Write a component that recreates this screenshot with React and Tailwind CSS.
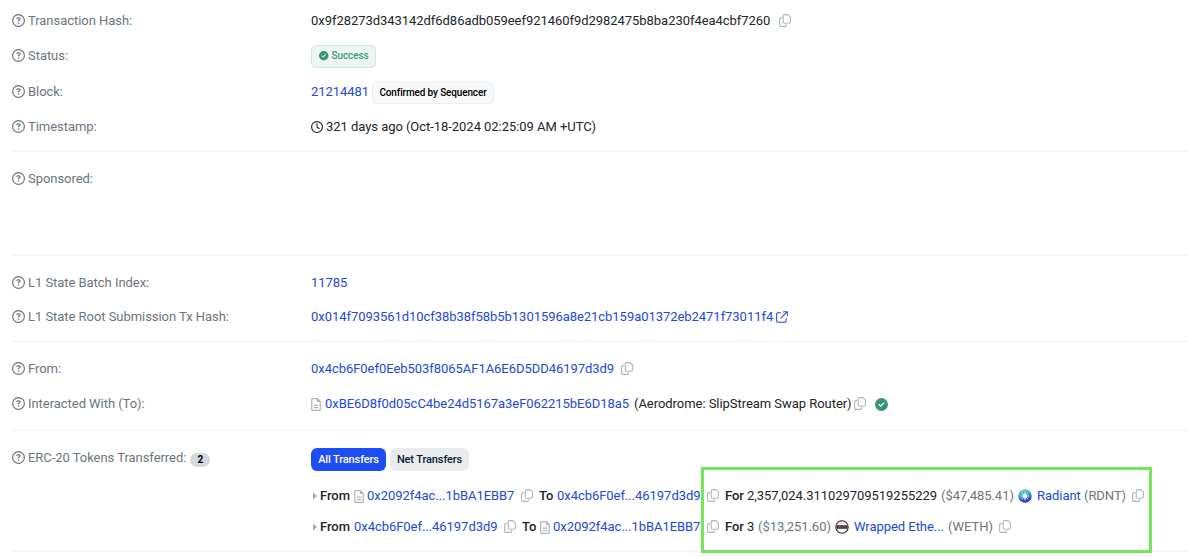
import React from "react";
import {
  FaRegCircleQuestion,
  FaRegClock,
  FaCircleCheck,
  FaRegFileLines,
} from "react-icons/fa6";

function CopyIcon({ className = "" }) {
  return (
    <svg
      viewBox="0 0 12 13"
      fill="none"
      stroke="#adb5bd"
      strokeWidth="1.1"
      strokeLinecap="round"
      className={`mb-px h-[13px] w-3 shrink-0 ${className}`}
    >
      <path d="M5.6 .6h3.1l2.7 2.3v4.9a1.4 1.4 0 0 1-1.4 1.4H5.6a1.4 1.4 0 0 1-1.4-1.4V2a1.4 1.4 0 0 1 1.4-1.4z" />
      <path d="M2.7 3.6H2A1.4 1.4 0 0 0 .6 5v6A1.4 1.4 0 0 0 2 12.4h4.2A1.4 1.4 0 0 0 7.6 11v-.2" />
    </svg>
  );
}

function ExternalIcon() {
  return (
    <svg
      viewBox="0 0 13 13"
      fill="none"
      stroke="#2248d8"
      strokeWidth="1.1"
      strokeLinecap="round"
      strokeLinejoin="round"
      className="ml-[3px] size-3 shrink-0"
    >
      <path d="M5 1.9H2.1A1.4 1.4 0 0 0 .7 3.3v7.5a1.4 1.4 0 0 0 1.4 1.4h7.5a1.4 1.4 0 0 0 1.4-1.4V8" />
      <path d="M8.2.7h4.1v4.1M12.1.9 5.2 7.8" />
    </svg>
  );
}

function RadiantLogo() {
  return (
    <svg viewBox="0 0 28 28" className="size-[14px] shrink-0">
      <defs>
        <linearGradient id="radiant" x1="0.3" y1="0" x2="0.6" y2="1">
          <stop offset="0" stopColor="#5be3b0" />
          <stop offset="0.5" stopColor="#2f93c4" />
          <stop offset="1" stopColor="#4417e0" />
        </linearGradient>
      </defs>
      <circle cx="14" cy="14" r="13.5" fill="url(#radiant)" />
      <path
        d="M14 6v16M6 14h16M8.4 8.4l11.2 11.2M19.6 8.4 8.4 19.6"
        stroke="#e4fbff"
        strokeWidth="2"
        strokeLinecap="round"
      />
      <circle cx="14" cy="14" r="4.5" fill="#e9fbff" />
    </svg>
  );
}

function WethLogo() {
  return (
    <svg viewBox="0 0 28 28" className="size-[14px] shrink-0">
      <circle cx="14" cy="14" r="12.4" fill="#fff" stroke="#3a2532" strokeWidth="2.2" />
      <path d="M2 11A12.4 12.4 0 0 1 14 1.6" fill="none" stroke="#a8486c" strokeWidth="2" />
      <path d="M8 7.5a9 9 0 0 1 12 0z" fill="#e6dbe1" />
      <rect x="3" y="10.5" width="22" height="7" rx="1.5" fill="#2b2228" />
      <path d="M6 12l1.5 3.5L9 12.5l1.5 3 1.3-3.5M14 12v4M16.5 12h3M18 12v4M21.5 12v4" stroke="#b9aeb5" strokeWidth="0.8" fill="none" />
    </svg>
  );
}

function Text({ className = "", children }) {
  return <span className={`shrink-0 whitespace-pre ${className}`}>{children}</span>;
}

function Row({ label, height, badge, children }) {
  return (
    <div className={`flex items-center ${height}`}>
      <div className="flex w-[299px] shrink-0 items-center text-[#6c757d]">
        <FaRegCircleQuestion className="mb-px size-[13px] shrink-0" />
        <Text className="ml-[3px]">{label}</Text>
        {badge}
      </div>
      <div className="flex min-w-0 grow items-center">{children}</div>
    </div>
  );
}

function FileIcon({ className = "" }) {
  return <FaRegFileLines className={`h-[13px] w-[10px] shrink-0 text-[#adb5bd] ${className}`} />;
}

function Caret() {
  return (
    <svg viewBox="0 0 4 8" className="ml-0.5 h-2 w-1 shrink-0" fill="#a3a9af">
      <path d="M0 .5 4 4 0 7.5z" />
    </svg>
  );
}

const link = "text-[#2248d8]";

export default function App() {
  return (
    <main className="relative h-[557px] w-[1200px] overflow-hidden bg-white px-3 font-[Roboto,sans-serif] text-[13px] leading-5 tracking-[-0.045px] text-[#212529]">
      <section className="h-[152px] border-b border-[#f1f2f4] pt-1">
        <Row label="Transaction Hash:" height="h-[34px]">
          <Text className="w-[468px]">0x9f28273d343142df6d86adb059eef921460f9d2982475b8ba230f4ea4cbf7260</Text>
          <CopyIcon />
        </Row>
        <Row label="Status:" height="h-9">
          <span className="flex h-[23px] w-[65px] items-center rounded-[5px] border border-[#cfe8df] bg-[#ebf5f2] pl-[7px] text-[10px] tracking-[-0.1px] font-medium text-[#3f9b7d]">
            <FaCircleCheck className="mr-[3px] size-[9.5px] shrink-0 text-[#379474]" />
            Success
          </span>
        </Row>
        <Row label="Block:" height="h-[35px]">
          <Text className={`w-[61px] ${link}`}>21214481</Text>
          <span className="mt-[3px] flex h-[22px] w-[122px] items-center justify-center rounded-[5px] border border-[#eceef0] bg-[#f8f9fa] text-[10px] tracking-[-0.14px] font-medium whitespace-nowrap text-black">
            Confirmed by Sequencer
          </span>
        </Row>
        <Row label="Timestamp:" height="h-9">
          <FaRegClock className="mr-[3px] size-3 shrink-0" />
          <Text>321 days ago (Oct-18-2024 02:25:09 AM +UTC)</Text>
        </Row>
      </section>

      <section className="h-[104px] border-b border-[#f1f2f4] pt-2.5">
        <Row label="Sponsored:" height="h-[34px]" />
      </section>

      <section className="h-[86px] border-b border-[#f1f2f4] pt-2.5">
        <Row label="L1 State Batch Index:" height="h-[34px]">
          <Text className={link}>11785</Text>
        </Row>
        <Row label="L1 State Root Submission Tx Hash:" height="h-[34px]">
          <Text className={`w-[462px] ${link}`}>0x014f7093561d10cf38b38f58b5b1301596a8e21cb159a01372eb2471f73011f4</Text>
          <ExternalIcon />
        </Row>
      </section>

      <section className="h-[89px] border-b border-[#f1f2f4] pt-2.5">
        <Row label="From:" height="h-[34px]">
          <Text className={`w-[310px] ${link}`}>0x4cb6F0ef0Eeb503f8065AF1A6E6D5DD46197d3d9</Text>
          <CopyIcon />
        </Row>
        <Row label="Interacted With (To):" height="h-9">
          <FileIcon className="mr-1" />
          <Text className={`w-[309px] ${link}`}>0xBE6D8f0d05cC4be24d5167a3eF062215bE6D18a5</Text>
          <Text className="w-[220px]">(Aerodrome: SlipStream Swap Router)</Text>
          <CopyIcon />
          <FaCircleCheck className="ml-[9px] size-[13px] shrink-0 text-[#379474]" />
        </Row>
      </section>

      <section className="h-[121px] border-b border-[#f1f2f4] pt-2.5">
        <Row
          label="ERC-20 Tokens Transferred:"
          height="h-[34px]"
          badge={
            <span className="mt-[3px] ml-1 flex h-[14px] w-5 items-center justify-center rounded-full bg-[#d5d9dd] text-[10px] font-bold text-black">
              2
            </span>
          }
        >
          <div className="mt-[3px] flex gap-1 text-[11px] font-medium tracking-[-0.12px]">
            <button className="h-[23px] w-[75px] rounded-md bg-[#1f4df5] whitespace-nowrap text-white">All Transfers</button>
            <button className="h-[23px] w-[79px] rounded-md bg-[#e9ecef] whitespace-nowrap text-[#081d35]">Net Transfers</button>
          </div>
        </Row>
        <div className="ml-[299px] pt-[5px]">
          <div className="flex h-8 items-center">
            <Caret />
            <Text className="ml-[3px] w-[34px] font-medium">From</Text>
            <FileIcon className="mr-[3px]" />
            <Text className={`w-[154px] ${link}`}>0x2092f4ac...1bBA1EBB7</Text>
            <CopyIcon />
            <Text className="ml-1.5 w-[18px] font-medium">To</Text>
            <Text className={`w-[150px] ${link}`}>0x4cb6F0ef...46197d3d9</Text>
            <CopyIcon />
            <Text className="ml-1.5 w-[22px] font-medium">For</Text>
            <Text className="w-[194px]">2,357,024.311029709519255229</Text>
            <Text className="w-[77px] text-[#6c757d]">($47,485.41)</Text>
            <RadiantLogo />
            <Text className={`ml-[5px] w-[47px] ${link}`}>Radiant</Text>
            <Text className="w-[48px] text-[#6c757d]">(RDNT)</Text>
            <CopyIcon />
          </div>
          <div className="flex h-[30px] items-center">
            <Caret />
            <Text className="ml-[3px] w-[34px] font-medium">From</Text>
            <Text className={`w-[150px] ${link}`}>0x4cb6F0ef...46197d3d9</Text>
            <CopyIcon />
            <Text className="ml-1.5 w-[18px] font-medium">To</Text>
            <FileIcon className="mr-[3px]" />
            <Text className={`w-[154px] ${link}`}>0x2092f4ac...1bBA1EBB7</Text>
            <CopyIcon />
            <Text className="ml-1.5 w-[22px] font-medium">For</Text>
            <Text className="w-[11px]">3</Text>
            <Text className="w-[77px] text-[#6c757d]">($13,251.60)</Text>
            <WethLogo />
            <Text className={`ml-[5px] w-[94px] ${link}`}>Wrapped Ethe...</Text>
            <Text className="w-[51px] text-[#6c757d]">(WETH)</Text>
            <CopyIcon />
          </div>
        </div>
      </section>
      <div className="pointer-events-none absolute top-[467px] left-[701px] h-[86px] w-[451px] border-[3px] border-[#75e657]" />
    </main>
  );
}
